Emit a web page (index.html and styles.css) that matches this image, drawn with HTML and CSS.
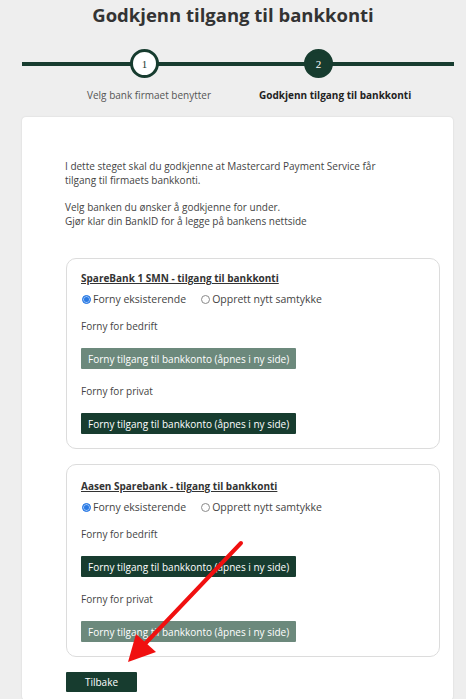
FILE: index.html
```html
<!DOCTYPE html>
<html lang="no">
<head>
  <meta charset="UTF-8" />
  <meta name="viewport" content="width=device-width, initial-scale=1.0"/>
  <title>Godkjenn tilgang til bankkonti</title>
  <link rel="stylesheet" href="styles.css">
</head>
<body>

  <!-- Header -->
  <h1 class="page-title">Godkjenn tilgang til bankkonti</h1>

  <!-- Stepper -->
  <div class="stepper">
    <span class="step-dot">1</span>
    <span class="step-dot active">2</span>
  </div>
  <div class="step-labels">
    <span>Velg bank firmaet benytter</span>
    <span class="current">Godkjenn tilgang til bankkonti</span>
  </div>

  <!-- Main card -->
  <div class="card">
    <p class="intro">
      I dette steget skal du godkjenne at Mastercard Payment Service får<br>
      tilgang til firmaets bankkonti.
    </p>
    <p class="intro">
      Velg banken du ønsker å godkjenne for under.<br>
      Gjør klar din BankID for å legge på bankens nettside
    </p>

    <div class="bank-box">
      <div class="bank-title">SpareBank 1 SMN - tilgang til bankkonti</div>
      <div class="radio-row">
        <label><span class="radio checked"></span>Forny eksisterende</label>
        <label><span class="radio"></span>Opprett nytt samtykke</label>
      </div>
      <div class="field-label">Forny for bedrift</div>
      <button class="btn muted">Forny tilgang til bankkonto (åpnes i ny side)</button>
      <div class="field-label">Forny for privat</div>
      <button class="btn">Forny tilgang til bankkonto (åpnes i ny side)</button>
    </div>

    <div class="bank-box">
      <div class="bank-title">Aasen Sparebank - tilgang til bankkonti</div>
      <div class="radio-row">
        <label><span class="radio checked"></span>Forny eksisterende</label>
        <label><span class="radio"></span>Opprett nytt samtykke</label>
      </div>
      <div class="field-label">Forny for bedrift</div>
      <button class="btn">Forny tilgang til bankkonto (åpnes i ny side)</button>
      <div class="field-label">Forny for privat</div>
      <button class="btn muted">Forny tilgang til bankkonto (åpnes i ny side)</button>
    </div>

    <button class="btn back-btn">Tilbake</button>
  </div>

  <!-- Red annotation arrow -->
  <svg class="annotation" width="466" height="699" viewBox="0 0 466 699">
    <line x1="241" y1="543" x2="142" y2="647" stroke="#f01010" stroke-width="4" stroke-linecap="round"/>
    <polygon points="128,662 136,634 156,652" fill="#f01010"/>
  </svg>

</body>
</html>
```

FILE: styles.css
```css
* {
  margin: 0;
  padding: 0;
  box-sizing: border-box;
}

body {
  font-family: "Open Sans", Arial, sans-serif;
  font-size: 10px;
  line-height: 14px;
  color: #444;
  background-color: #eeeeee;
  height: 699px;
  overflow: hidden;
  position: relative;
}

.page-title {
  font-size: 18.5px;
  line-height: 28px;
  font-weight: bold;
  color: #333;
  text-align: center;
  padding-top: 1px;
}

/* Stepper */
.stepper {
  margin: 20px 12px 0 22px;
  display: flex;
  gap: 145px;
  padding-left: 108px;
  background: linear-gradient(#173c2f, #173c2f) no-repeat 0 50% / 100% 4px;
}

.step-dot {
  width: 29px;
  height: 29px;
  border-radius: 50%;
  border: 3px solid #173c2f;
  background: #fff;
  color: #173c2f;
  font-family: "Liberation Serif", serif;
  font-size: 11px;
  display: flex;
  align-items: center;
  justify-content: center;
}

.step-dot.active {
  background: #173c2f;
  color: #fff;
}

.step-labels {
  display: flex;
  gap: 48px;
  padding-left: 87px;
  margin-top: 10px;
  color: #555;
}

.step-labels .current {
  font-weight: bold;
  color: #222;
}

/* Card */
.card {
  background: #fff;
  margin: 15px 13px 0 22px;
  padding: 42px 13px 0 44px;
  border-radius: 4px;
  box-shadow: 0 0 2px rgba(0, 0, 0, 0.12);
  height: 583px;
  overflow: hidden;
}

.intro {
  margin-left: -1px;
  margin-bottom: 13px;
}

.bank-box {
  border: 1px solid #dcdcdc;
  border-radius: 10px;
  padding: 12px 14px 14px 14px;
  margin-top: 30px;
}

.bank-box + .bank-box {
  margin-top: 15px;
  padding-top: 14px;
}

.bank-title {
  font-weight: bold;
  color: #333;
  text-decoration: underline;
}

.radio-row {
  display: flex;
  gap: 15px;
  margin-top: 7px;
  padding-left: 1px;
  font-size: 10.5px;
  height: 14px;
}

.radio-row label {
  display: flex;
  align-items: center;
  gap: 2px;
}

.radio {
  width: 9px;
  height: 9px;
  border-radius: 50%;
  border: 1px solid #8a8a8a;
  background: #fff;
}

.radio.checked {
  border-color: #2a7ae4;
  background: #2a7ae4;
  box-shadow: inset 0 0 0 1px #9cc3f5;
}

.field-label {
  margin-top: 13px;
}

.btn {
  display: block;
  height: 21px;
  margin-top: 15px;
  padding: 0 7px;
  background: #173c2f;
  color: #fff;
  border: none;
  border-radius: 1px;
  font-family: "Open Sans", Arial, sans-serif;
  font-size: 10px;
  cursor: pointer;
}

.btn + .field-label {
  margin-top: 15px;
}

.btn.muted {
  background: #6c897c;
}

.back-btn {
  margin-top: 15px;
  width: 71px;
  height: 20px;
}

.annotation {
  position: absolute;
  top: 0;
  left: 0;
  pointer-events: none;
}
```
